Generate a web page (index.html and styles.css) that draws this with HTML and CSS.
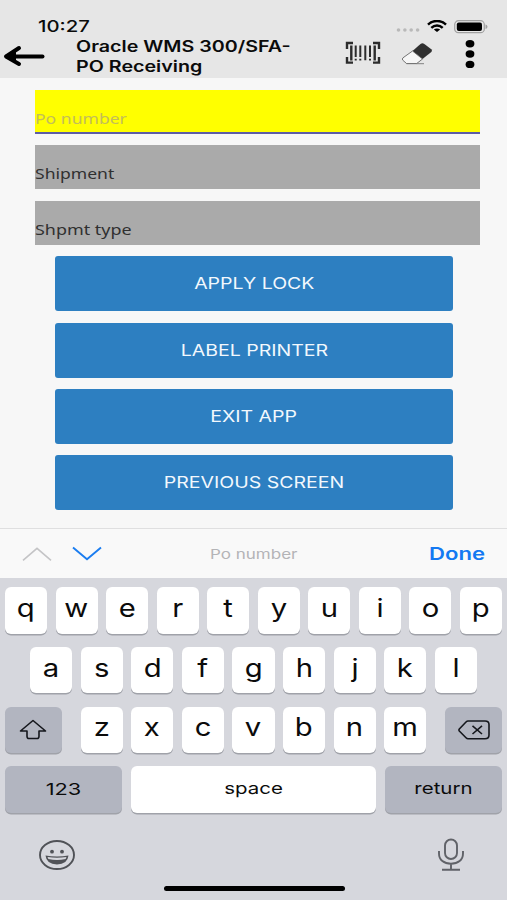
FILE: index.html
```html
<!DOCTYPE html>
<html lang="en">
<head>
<meta charset="utf-8">
<title>PO Receiving</title>
<link rel="stylesheet" href="styles.css">
</head>
<body>
<div class="screen">
  <header class="top">
    <div class="status">
      <span class="wide time">10:27</span>
      <svg class="signal" width="24" height="4" viewBox="0 0 24 4" fill="#b9b9b9"><circle cx="2.5" cy="2" r="1.8"/><circle cx="8.9" cy="2" r="1.8"/><circle cx="15.2" cy="2" r="1.8"/><circle cx="21.6" cy="2" r="1.8"/></svg>
      <svg class="wifi" width="20" height="12" viewBox="0 0 20 12" fill="none" stroke="#000" stroke-width="2.5"><path d="M1 4.6C6-.2 14-.2 19 4.6"/><path d="M4.3 7.8C7.6 4.8 12.4 4.8 15.7 7.8"/><path d="M6.8 9.6Q10 7.2 13.2 9.6L10 12Z" fill="#000" stroke="none"/></svg>
      <svg class="battery" width="34" height="14" viewBox="0 0 34 14"><rect x=".7" y=".7" width="29.6" height="12" rx="3.8" fill="#e7e7e7" stroke="#a0a0a0" stroke-width="1.2"/><rect x="2.8" y="2.4" width="25.2" height="8.6" rx="2" fill="#000"/><path d="M31.5 4.5q2 .5 2 2.2t-2 2.2z" fill="#a0a0a0"/></svg>
    </div>
    <div class="bar">
      <svg class="back" width="42" height="22" viewBox="0 0 42 22" fill="none" stroke="#000" stroke-width="4" stroke-linecap="round" stroke-linejoin="round"><path d="M16 3L3 11.5L16 19"/><path d="M4 11.5H39.5"/><path d="M3 11.5L13 6.5V16.5Z" fill="#000" stroke="none"/></svg>
      <h1 class="title"><span class="wide title-a">Oracle WMS 300/SFA-</span><span class="wide title-b">PO Receiving</span></h1>
      <svg class="scan" width="36" height="24" viewBox="0 0 36 24" fill="none" stroke="#2c2c2c"><path d="M8 2H2V8M28 2H34V8M8 21.6H2V16M28 21.6H34V16" stroke-width="2.4"/><path d="M6.3 4.5V19.5M29.7 4.5V19.5" stroke-width="2.4"/><path d="M10.7 4.5V16M15.3 4.5V16M20.3 4.5V19.2M25 4.5V16" stroke-width="2"/><path d="M10.7 17.8V19.5M15.3 17.8V19.5M25 17.8V19.5" stroke-width="2"/></svg>
      <svg class="eraser" width="32" height="24" viewBox="0 0 32 24"><path d="M11.5 9L19.5 2Q21.3.8 23 1.8L30.3 7.3Q31.7 8.7 30.3 10L21.5 17Z" fill="#303030"/><path d="M11.5 9L2 15.8Q.7 17 1.8 18.2L5.5 21.5H15.7L21.5 17Z" fill="#f6f6f6" stroke="#555" stroke-width=".8"/><path d="M5.5 21.7H23" stroke="#777" stroke-width=".9"/></svg>
      <svg class="more" width="10" height="30" viewBox="0 0 10 30"><ellipse cx="5" cy="4.7" rx="4.4" ry="3.7"/><ellipse cx="5" cy="15" rx="4.4" ry="3.7"/><ellipse cx="5" cy="25.4" rx="4.4" ry="3.7"/></svg>
    </div>
  </header>
  <main class="form">
    <div class="field active"><span class="wide f-po">Po number</span></div>
    <div class="field"><span class="wide f-ship">Shipment</span></div>
    <div class="field"><span class="wide f-type">Shpmt type</span></div>
    <div class="actions">
      <button class="action"><span class="wide">APPLY LOCK</span></button>
      <button class="action"><span class="wide">LABEL PRINTER</span></button>
      <button class="action"><span class="wide">EXIT APP</span></button>
      <button class="action"><span class="wide">PREVIOUS SCREEN</span></button>
    </div>
  </main>
  <div class="accessory">
    <svg class="prev" width="30" height="16" viewBox="0 0 30 16" fill="none" stroke="#c4c4c6" stroke-width="1.6"><path d="M1 14.3L15 2.3L29 14.3"/></svg>
    <svg class="next" width="30" height="16" viewBox="0 0 30 16" fill="none" stroke="#1b7df0" stroke-width="1.9"><path d="M1 1.5L15 13.2L29 1.5"/></svg>
    <span class="hint"><span class="wide">Po number</span></span>
    <span class="wide done">Done</span>
  </div>
  <div class="keyboard">
    <div class="row"><b class="key"><i>q</i></b><b class="key"><i>w</i></b><b class="key"><i>e</i></b><b class="key"><i>r</i></b><b class="key"><i>t</i></b><b class="key"><i>y</i></b><b class="key"><i>u</i></b><b class="key"><i>i</i></b><b class="key"><i>o</i></b><b class="key"><i>p</i></b></div>
    <div class="row"><b class="key"><i>a</i></b><b class="key"><i>s</i></b><b class="key"><i>d</i></b><b class="key"><i>f</i></b><b class="key"><i>g</i></b><b class="key"><i>h</i></b><b class="key"><i>j</i></b><b class="key"><i>k</i></b><b class="key"><i>l</i></b></div>
    <div class="row spread">
      <b class="key mod"><svg width="28" height="22" viewBox="0 0 28 22" fill="none" stroke="#15171c" stroke-width="1.6" stroke-linejoin="round"><path d="M14 1.5L26.5 12H20V17.2Q20 19.5 18 19.5H10Q8 19.5 8 17.2V12H1.5Z"/></svg></b>
      <div class="row"><b class="key"><i>z</i></b><b class="key"><i>x</i></b><b class="key"><i>c</i></b><b class="key"><i>v</i></b><b class="key"><i>b</i></b><b class="key"><i>n</i></b><b class="key"><i>m</i></b></div>
      <b class="key mod"><svg width="32" height="20" viewBox="0 0 32 20" fill="none" stroke="#15171c" stroke-width="1.6" stroke-linejoin="round"><path d="M10 1H27Q31 1 31 4.5V15Q31 18.7 27 18.7H10Q9 18.7 8 17.7L1.3 11Q.6 10 1.3 9L8 2Q9 1 10 1Z"/><path d="M14.5 5.8L24 14M24 5.8L14.5 14"/></svg></b>
    </div>
    <div class="row">
      <b class="key word numbers"><span class="wide">123</span></b>
      <b class="key word space"><span class="wide">space</span></b>
      <b class="key word return"><span class="wide">return</span></b>
    </div>
    <div class="dock">
      <svg width="38" height="32" viewBox="0 0 38 32"><ellipse cx="19" cy="16" rx="17" ry="14" fill="none" stroke="#505257" stroke-width="1.9"/><circle cx="14" cy="12.7" r="1.9" fill="#505257"/><circle cx="24" cy="12.7" r="1.9" fill="#505257"/><path d="M7.5 16.6Q19 18.6 30.5 16.6Q29.5 25.5 19 25.5T7.5 16.6Z" fill="#505257"/><path d="M9.5 18.1Q19 19.4 28.5 18.1L27.6 20Q19 22.2 10.4 20Z" fill="#d6d7dd"/></svg>
      <svg width="28" height="34" viewBox="0 0 28 34" fill="none" stroke="#606268" stroke-width="1.9"><rect x="8" y="1.5" width="12" height="19.5" rx="6"/><path d="M2 13V15.5C2 22 7 25.8 14 25.8S26 22 26 15.5V13M14 26V31.5M5 31.8H23"/></svg>
    </div>
    <div class="home"></div>
  </div>
</div>
</body>
</html>
```
FILE: styles.css
```css
* { box-sizing: border-box; }
body { margin: 0; font-family: Inter, "Liberation Sans", sans-serif; color: #0b0b0b; }
.screen { width: 507px; height: 900px; display: flex; flex-direction: column; background: #f7f7f7; overflow: hidden; }
.wide { display: inline-block; white-space: nowrap; transform: scaleX(1.22); }

.top { height: 78px; background: #e6e6e6; }
.status { height: 38px; padding: 16px 19px 0 38px; display: flex; align-items: flex-start; }
.time { font-size: 16px; line-height: 21px; font-weight: 500; transform: scaleX(1.27); transform-origin: left; margin-right: auto; }
.signal { margin: 12px 7px 0 0; }
.wifi { margin: 4px 7px 0 0; }
.battery { margin: 4px 0 0; }
.bar { height: 40px; padding-left: 3px; display: flex; align-items: flex-start; }
.back { margin-top: 7px; }
.title { margin: -1px 0 0 31px; width: 269px; font-size: 15.5px; line-height: 19.8px; font-weight: 600; }
.title .wide { display: block; width: max-content; transform-origin: left; }
.title .title-a { transform: scaleX(1.27); }
.title .title-b { transform: scaleX(1.27); }
.scan { margin-top: 3px; }
.eraser { margin: 4px 0 0 20px; }
.more { margin: 1px 0 0 32px; }

.form { height: 450px; padding: 12px 27px 0 35px; display: flex; flex-direction: column; gap: 11.4px; font-family: "Noto Sans", sans-serif; }
.field { height: 44px; background: #aaa; display: flex; align-items: flex-end; padding-bottom: 6px; font-size: 15px; line-height: 20px; color: #303030; }
.field .wide { transform: scaleX(1.17); transform-origin: left; }
.field .f-type { transform: scaleX(1.195); }
.active { background: #ff0; border-bottom: 2px solid #5d5da6; color: #c3bd5a; padding-bottom: 4px; }
.actions { padding: 0 27px 0 20px; display: flex; flex-direction: column; gap: 11.4px; }
.action { height: 55px; border: 0; border-radius: 3px; padding: 0 0 1px; background: #2d7fc1; color: #f2f8fd; font: 400 16px/22px Inter, sans-serif; }

.accessory { height: 50px; border-top: 1px solid #dfdfe0; background: #f9f9f9; padding: 0 22px; display: flex; align-items: center; }
.next { margin-left: 20px; }
.hint { flex: 1; text-align: center; padding-right: 36px; color: #b4b4b7; font-size: 13.5px; }
.hint .wide { transform: scaleX(1.26); }
.done { color: #1479f2; font-size: 17px; font-weight: 600; transform: scaleX(1.3); transform-origin: right; }

.keyboard { flex: 1; padding: 9px 5px 0; background: #d6d7dd; display: flex; flex-direction: column; gap: 13.3px; }
.row { display: flex; justify-content: center; gap: 8.3px; }
.spread { justify-content: space-between; }
.key { width: 42.3px; height: 46.5px; border-radius: 6px; background: #fff; box-shadow: 0 1.4px 0 #a0a2a9; display: flex; align-items: center; justify-content: center; font-size: 25px; font-weight: 400; line-height: 30px; padding-bottom: 5px; }
.key i { font-style: normal; transform: scaleX(1.17); }
.mod { width: 56.5px; background: #b2b5c0; padding: 0; }
.word { font-size: 16.5px; font-weight: 400; padding-bottom: 3px; }
.word .wide { transform: scaleX(1.24); }
.numbers, .return { width: 117.5px; background: #b2b5c0; }
.numbers { padding-bottom: 1px; }
.numbers .wide { transform: scaleX(1.32); }
.space { width: 246px; }
.dock { display: flex; justify-content: space-between; align-items: center; height: 34px; padding: 0 37px 0 33px; margin-top: 12px; }
.home { width: 181px; height: 5px; border-radius: 3px; background: #000; margin: 1px 0 0 159px; }
```
